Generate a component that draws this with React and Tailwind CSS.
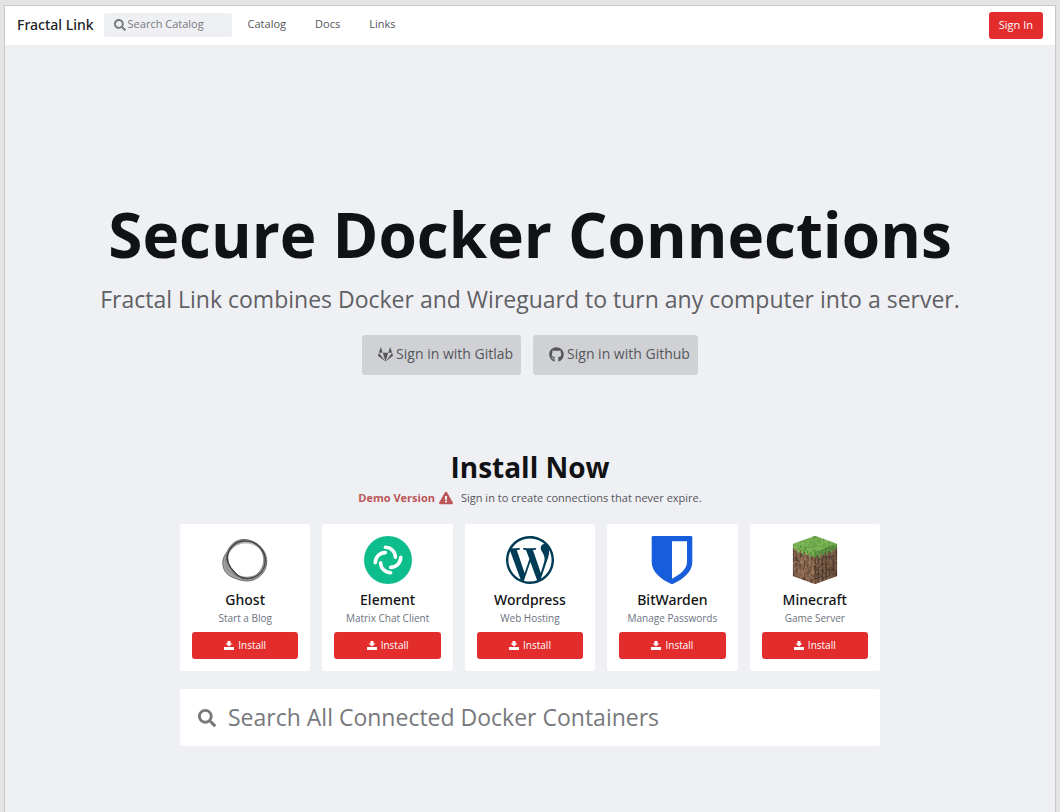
import React from "react";
import {
  FaSearch,
  FaGitlab,
  FaGithub,
  FaExclamationTriangle,
  FaWordpressSimple,
} from "react-icons/fa";

function DownloadIcon() {
  return (
    <svg viewBox="0 0 20 18" className="h-[9px] w-2.5" fill="currentColor" aria-hidden="true">
      <path d="M7 0H13V5H17L10 11L3 5H7Z" />
      <path d="M0 12H20V18H0Z" />
    </svg>
  );
}

function GhostLogo() {
  return (
    <svg viewBox="0 0 48 48" className="size-12" fill="none" aria-hidden="true">
      <path
        fillRule="evenodd"
        fill="#666"
        fillOpacity="0.6"
        d="M22 3.500C34 3 46 13 45.800 26C45.500 37 36 45 26 45C20 45 16 43 12 41.500C5 39 1.500 33 1.800 26C2.200 20 5 18 7 14C10 8 15 4 22 3.500ZM25 6.500C15 6.500 8.500 13 7.500 21C7 29 12 35 17 38.500C22 41.500 32 42 37 37C42 32 44 24 41 17C38 10 32 6.500 25 6.500Z"
      />
      <g stroke="#555" strokeWidth="0.8">
        <path d="M22 3.500C34 3 46 13 45.800 26C45.500 37 36 45 26 45C20 45 16 43 12 41.500C5 39 1.500 33 1.800 26C2.200 20 5 18 7 14C10 8 15 4 22 3.500Z" />
        <path
          stroke="#333"
          strokeWidth="1.1"
          d="M25 5C35 5 44.500 14 44.300 25C44 36 35 42.500 26 42.800C18 42.500 14 37 10 32C5.500 26 5 20 8.500 14C12 8 18 5 25 5Z"
        />
        <path d="M24 7C15 7 4 16 4.500 26C5 36 13 41 25 41.500C36 42 42.500 33 42.800 24C43 14 35 7 24 7Z" strokeWidth="0.4" />
        <path
          strokeWidth="0.6"
          d="M20 4.500C30 3.500 38 9 42 16C46 24 44 35 36 40C28 45 17 43 11 35C5 27 4 21 7 16C10 10 14 5.500 20 4.500Z"
        />
      </g>
    </svg>
  );
}

function ElementLogo() {
  return (
    <svg viewBox="0 0 54 54" className="size-12" aria-hidden="true">
      <circle cx="27" cy="27" r="27" fill="#0dbd8b" />
      <g fill="none" stroke="#fff" strokeWidth="4" strokeLinecap="round">
        {[0, 90, 180, 270].map((a) => (
          <path key={a} d="M24 12.700A11.300 11.300 0 0 1 35.300 24" transform={`rotate(${a} 27 27)`} />
        ))}
      </g>
    </svg>
  );
}

function WordpressLogo() {
  return (
    <FaWordpressSimple viewBox="8 8 496 496" className="size-12 text-[#003c56]" aria-hidden="true" />
  );
}

function BitwardenLogo() {
  return (
    <svg viewBox="0 0 48 48" className="size-12" aria-hidden="true">
      <path
        fill="#175ddc"
        d="M5 0H43Q44.300 0 44.300 1.300V26C44.300 36 35 43.500 24 48.300C13 43.500 3.700 36 3.700 26V1.300Q3.700 0 5 0Z"
      />
      <path fill="#fff" d="M24 5.300H39V26C39 33 32 38.500 24 42.700Z" />
    </svg>
  );
}

const GREENS = ["#5d9b38", "#6bad42", "#4f8a2f", "#78b94d", "#62a33c"];
const GREENS_SHADE = ["#4a8230", "#558f35", "#3e7027"];
const BROWNS_LEFT = ["#73513a", "#5e402b", "#80593f", "#4d3524", "#6a4831", "#916a4b"];
const BROWNS_RIGHT = ["#5a3e2b", "#482f20", "#674731", "#3b281b", "#523827", "#775439"];
const GRASS_DEPTH = [2, 3, 2, 4, 3, 2, 3, 4, 2, 3, 3, 2, 4, 3, 2, 3];

function noise(x, y, seed) {
  const v = Math.sin(x * 127.1 + y * 311.7 + seed * 74.7) * 43758.5453;
  return v - Math.floor(v);
}

function buildFace(origin, u, v, seed, pick) {
  const cells = [];
  const n = 16;
  for (let y = 0; y < n; y++) {
    for (let x = 0; x < n; x++) {
      const at = (i, j) =>
        `${origin[0] + (u[0] * i + v[0] * j) / n},${origin[1] + (u[1] * i + v[1] * j) / n}`;
      const points = [at(x, y), at(x + 1, y), at(x + 1, y + 1), at(x, y + 1)].join(" ");
      const fill = pick(x, y, noise(x, y, seed));
      cells.push(
        <polygon key={`${seed}-${x}-${y}`} points={points} fill={fill} stroke={fill} strokeWidth="0.6" />
      );
    }
  }
  return cells;
}

const choose = (list, r) => list[Math.floor(r * list.length)];

const blockCells = [
  ...buildFace([66, 0], [66, 24], [-66, 24], 1, (x, y, r) => choose(GREENS, r)),
  ...buildFace([0, 24], [66, 24], [0, 96], 2, (x, y, r) =>
    choose(y < GRASS_DEPTH[x] ? GREENS : BROWNS_LEFT, r)
  ),
  ...buildFace([66, 48], [66, -24], [0, 96], 3, (x, y, r) =>
    choose(y < GRASS_DEPTH[15 - x] ? GREENS_SHADE : BROWNS_RIGHT, r)
  ),
];

function MinecraftLogo() {
  return (
    <svg viewBox="-6 0 144 144" className="size-12" aria-hidden="true">
      {blockCells}
    </svg>
  );
}

const APPS = [
  { name: "Ghost", about: "Start a Blog", Logo: GhostLogo },
  { name: "Element", about: "Matrix Chat Client", Logo: ElementLogo },
  { name: "Wordpress", about: "Web Hosting", Logo: WordpressLogo },
  { name: "BitWarden", about: "Manage Passwords", Logo: BitwardenLogo },
  { name: "Minecraft", about: "Game Server", Logo: MinecraftLogo },
];

function Header() {
  return (
    <header className="flex h-[39px] items-center justify-between bg-white px-3">
      <div className="flex items-center pb-0.5">
        <a href="#home" className="font-['Noto_Sans'] text-sm font-medium text-[#212225]">
          Fractal Link
        </a>
        <label className="ml-2.5 flex h-6 w-32 items-center gap-0.5 rounded-xs bg-[#eff0f4] pl-2.5 text-[#77787c]">
          <FaSearch className="size-3 shrink-0" aria-hidden="true" />
          <input
            type="search"
            aria-label="Search Catalog"
            placeholder="Search Catalog"
            className="w-full min-w-0 bg-transparent text-[11px] outline-none placeholder:text-[#77787c]"
          />
        </label>
        <nav className="ml-4 flex gap-[29px] text-[11px] text-[#55565a]">
          <a href="#catalog">Catalog</a>
          <a href="#docs">Docs</a>
          <a href="#links">Links</a>
        </nav>
      </div>
      <button type="button" className="h-[27px] rounded-[3px] bg-[#e32d2d] px-2.5 text-[11px] text-white">
        Sign In
      </button>
    </header>
  );
}

function ProviderButton({ Icon, children }) {
  return (
    <button
      type="button"
      className="flex h-10 items-center gap-[3px] rounded-[3px] bg-[#d0d1d5] pr-2 pb-0.5 pl-4 text-sm text-[#55565a]"
    >
      <Icon className="size-[15px]" aria-hidden="true" />
      {children}
    </button>
  );
}

function AppCard({ name, about, Logo }) {
  return (
    <article className="flex flex-col items-center rounded-[3px] bg-white p-3">
      <Logo />
      <h3 className="mt-1.5 font-['Noto_Sans'] text-sm leading-5 font-medium text-[#111214]">{name}</h3>
      <p className="text-[10px] leading-4 whitespace-nowrap text-[#6b7280]">{about}</p>
      <button
        type="button"
        aria-label={`Install ${name}`}
        className="mt-1.5 flex h-[27px] w-full items-center justify-center gap-1 rounded-[3px] bg-[#e32d2d] text-[10px] text-white"
      >
        <DownloadIcon />
        Install
      </button>
    </article>
  );
}

export default function App() {
  return (
    <div className="flex min-h-screen flex-col bg-[#e4e4e4] px-1 pt-[5px] font-['Open_Sans',sans-serif]">
      <div className="flex grow flex-col border border-b-0 border-[#c9c9c9] bg-[#eff0f4]">
        <Header />
        <main className="flex flex-col items-center px-4 pt-[149px] pb-16">
          <h1 className="text-center text-[62px] leading-20 font-bold text-[#111214]">
            Secure Docker Connections
          </h1>
          <p className="mt-[9px] text-center text-[23px] leading-8 text-[#5f6064]">
            Fractal Link combines Docker and Wireguard to turn any computer into a server.
          </p>
          <div className="mt-5 flex gap-3">
            <ProviderButton Icon={FaGitlab}>Sign in with Gitlab</ProviderButton>
            <ProviderButton Icon={FaGithub}>Sign in with Github</ProviderButton>
          </div>
          <section className="mt-[72px] flex w-full max-w-[700px] flex-col">
            <h2 className="text-center text-[28px] leading-10 font-bold text-[#111214]">Install Now</h2>
            <p className="mt-px flex items-center justify-center text-[11px] leading-5 text-[#55565a]">
              <strong className="flex items-center gap-1 font-bold text-[#ba5658]">
                Demo Version
                <FaExclamationTriangle className="size-3.5" aria-hidden="true" />
              </strong>
              <span className="ml-2">Sign in to create connections that never expire.</span>
            </p>
            <div className="mt-4 grid grid-cols-5 gap-3">
              {APPS.map((app) => (
                <AppCard key={app.name} {...app} />
              ))}
            </div>
            <label className="mt-[18px] flex h-[57px] items-center gap-3 rounded-[3px] bg-white px-[18px] text-[#77787c]">
              <FaSearch className="size-[18px] shrink-0" aria-hidden="true" />
              <input
                type="search"
                aria-label="Search All Connected Docker Containers"
                placeholder="Search All Connected Docker Containers"
                className="w-full min-w-0 bg-transparent text-[23px] outline-none placeholder:text-[#77787c]"
              />
            </label>
          </section>
        </main>
      </div>
    </div>
  );
}
